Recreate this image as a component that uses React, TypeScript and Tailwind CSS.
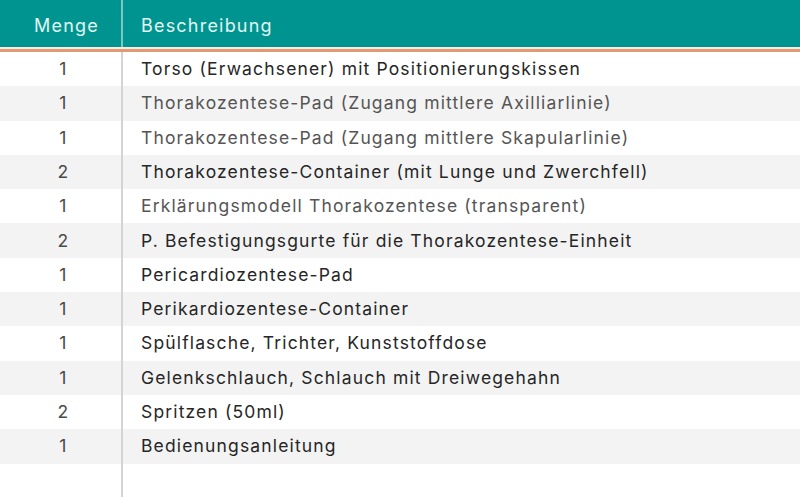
import React from "react";

const rows: { q: string; d: string; light?: boolean }[] = [
  { q: "1", d: "Torso (Erwachsener) mit Positionierungskissen" },
  { q: "1", d: "Thorakozentese-Pad (Zugang mittlere Axilliarlinie)", light: true },
  { q: "1", d: "Thorakozentese-Pad (Zugang mittlere Skapularlinie)", light: true },
  { q: "2", d: "Thorakozentese-Container (mit Lunge und Zwerchfell)" },
  { q: "1", d: "Erklärungsmodell Thorakozentese (transparent)", light: true },
  { q: "2", d: "P. Befestigungsgurte für die Thorakozentese-Einheit" },
  { q: "1", d: "Pericardiozentese-Pad" },
  { q: "1", d: "Perikardiozentese-Container" },
  { q: "1", d: "Spülflasche, Trichter, Kunststoffdose" },
  { q: "1", d: "Gelenkschlauch, Schlauch mit Dreiwegehahn" },
  { q: "2", d: "Spritzen (50ml)" },
  { q: "1", d: "Bedienungsanleitung" },
];

export default function App() {
  return (
    <div
      className="w-[800px] h-[497px] bg-white overflow-hidden flex flex-col"
      style={{ fontFamily: "Inter, 'Noto Sans', sans-serif" }}
    >
      <div className="flex h-[47px] bg-[#009490] text-[#e3f5f3] text-[18px] tracking-[1.2px]">
        <div className="w-[121px] flex items-center justify-center pl-[12px] pt-[3px]">Menge</div>
        <div className="w-[2px] bg-[#7cc7c3]" />
        <div className="flex-1 flex items-center pl-[18px] pt-[3px]">Beschreibung</div>
      </div>
      <div className="h-[2px] bg-[#f3ede6]" />
      <div className="h-[3px] bg-[#e39a72]" />
      <div className="flex-1 flex flex-col">
        {rows.map((r, i) => (
          <div
            key={i}
            className={`flex h-[34.3px] text-[17.5px] tracking-[1.15px] ${i % 2 === 1 ? "bg-[#f3f3f3]" : "bg-white"}`}
          >
            <div className="w-[121px] flex items-center justify-center pl-[6px] text-[#4a4a4a]">{r.q}</div>
            <div className="w-[2px] bg-[#d4d4d4]" />
            <div className={`flex-1 flex items-center pl-[18px] ${r.light ? "text-[#555555]" : "text-[#262626]"}`}>
              {r.d}
            </div>
          </div>
        ))}
        <div className="flex flex-1">
          <div className="w-[121px]" />
          <div className="w-[2px] bg-[#d4d4d4]" />
          <div className="flex-1" />
        </div>
      </div>
    </div>
  );
}
